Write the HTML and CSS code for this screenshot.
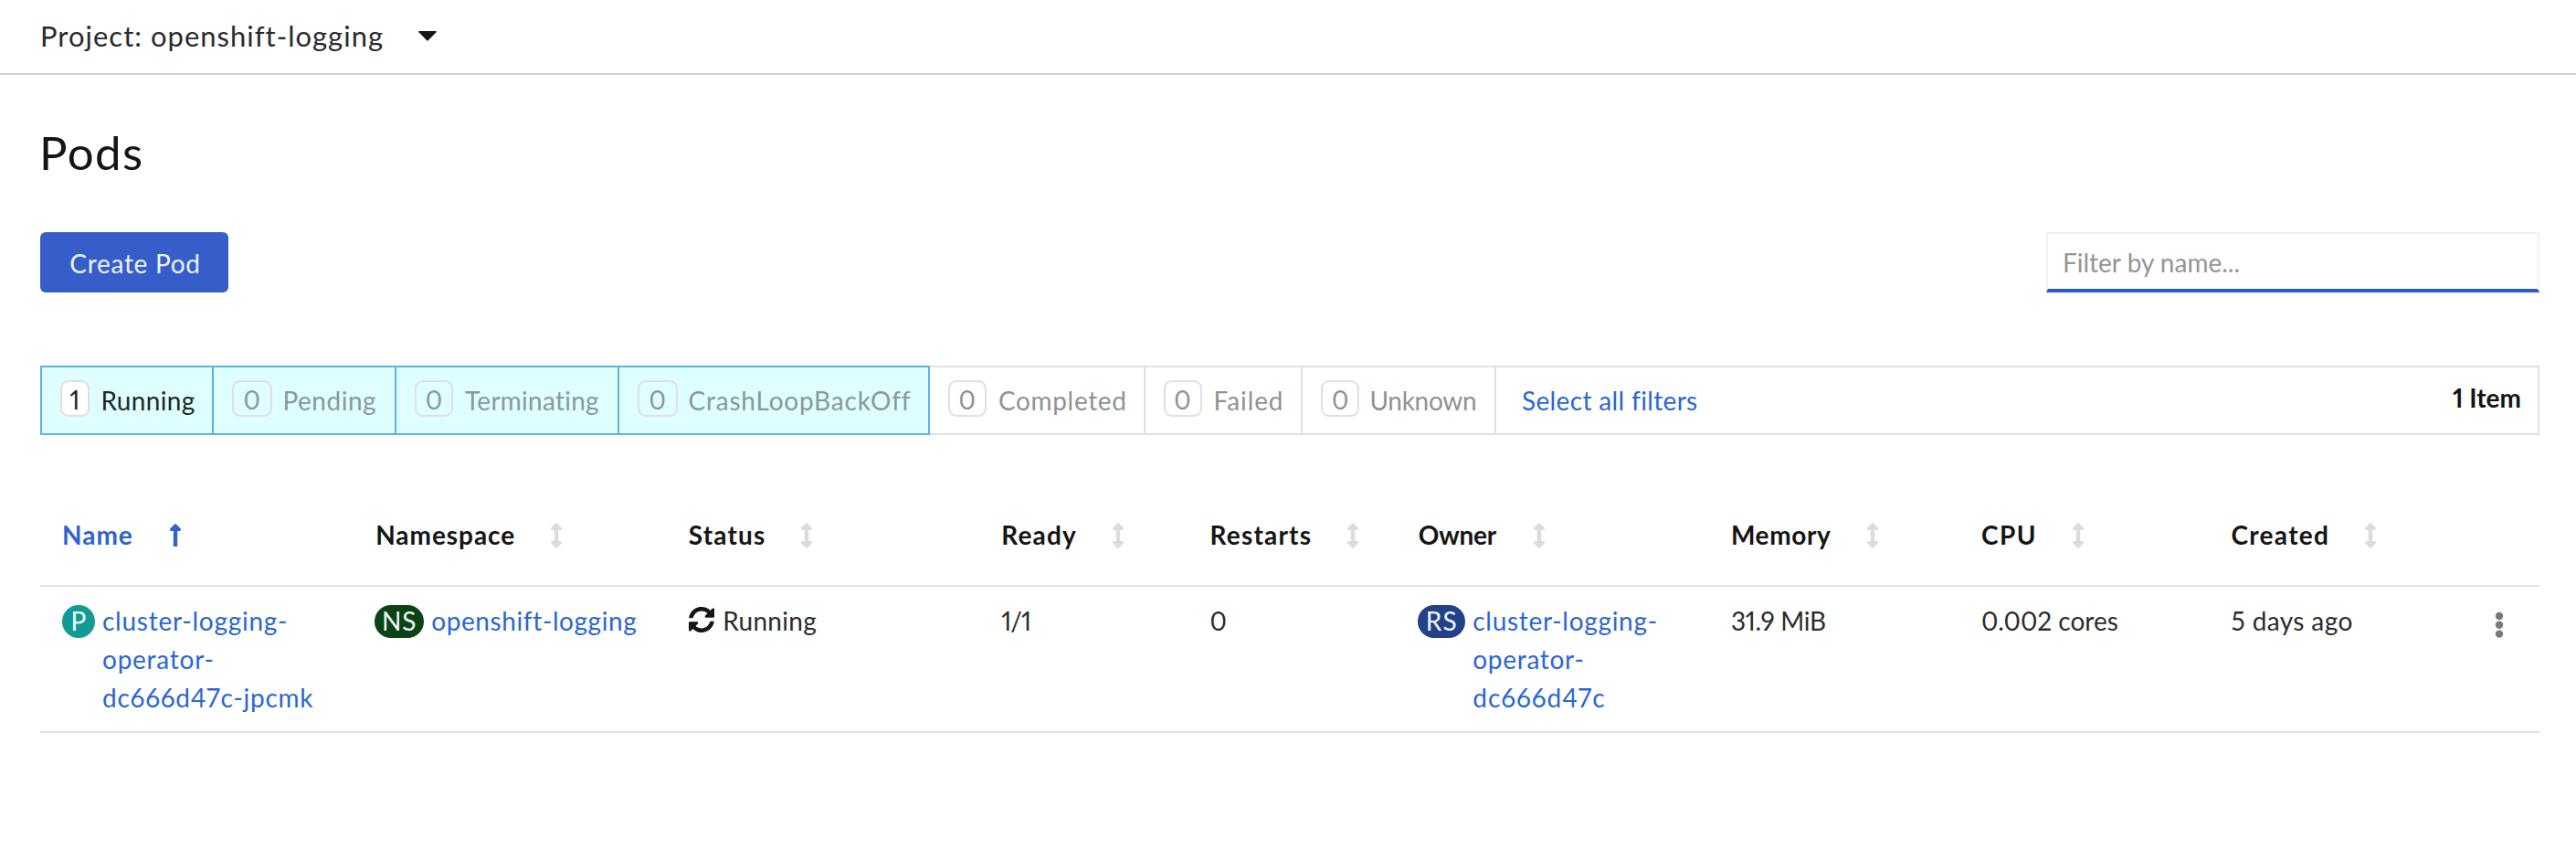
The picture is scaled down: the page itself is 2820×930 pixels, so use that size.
FILE: index.html
```html
<!DOCTYPE html>
<html lang="en">
<head>
<meta charset="utf-8">
<title>Pods</title>
<link rel="stylesheet" href="styles.css">
</head>
<body>
<svg class="defs" width="0" height="0" aria-hidden="true">
  <symbol id="sort" viewBox="0 0 12 28"><path d="M5.2.4Q6 -.3 6.800.4L11.600 5.200Q12.600 7.500 10.800 8H8.200V20H10.800Q12.600 20.500 11.600 22.800L6.800 27.600Q6 28.300 5.200 27.600L.4 22.800Q-.6 20.500 1.200 20H3.800V8H1.200Q-.6 7.500.4 5.200Z"/></symbol>
  <symbol id="sort-up" viewBox="0 0 12 28"><path d="M5.200 1.400Q6 .7 6.800 1.400L11.600 6.200Q12.600 8.500 10.800 9H8.200V25.200Q8.200 26 7.400 26H4.600Q3.800 26 3.800 25.200V9H1.200Q-.6 8.500.4 6.200Z"/></symbol>
</svg>
<header class="project-bar">
  <span class="project-name">Project: openshift-logging</span>
  <svg class="caret" width="20" height="11" viewBox="0 0 20 11"><path d="M.8 0h18.400q1 .3.3 1.300L11 10q-1 1-2 0L.5 1.300Q-.2.3.8 0z"/></svg>
</header>
<main class="page">
  <h1 class="title">Pods</h1>
  <div class="toolbar">
    <button class="create">Create Pod</button>
    <input class="search" type="text" placeholder="Filter by name...">
  </div>
  <div class="filters">
    <div class="filter on live running"><span class="count">1</span><span class="label">Running</span></div>
    <div class="filter on pending"><span class="count">0</span><span class="label">Pending</span></div>
    <div class="filter on terminating"><span class="count">0</span><span class="label">Terminating</span></div>
    <div class="filter on crash"><span class="count">0</span><span class="label">CrashLoopBackOff</span></div>
    <div class="filter completed"><span class="count">0</span><span class="label">Completed</span></div>
    <div class="filter failed"><span class="count">0</span><span class="label">Failed</span></div>
    <div class="filter unknown"><span class="count">0</span><span class="label">Unknown</span></div>
    <div class="summary"><a class="select-all">Select all filters</a><span class="items">1 Item</span></div>
  </div>
  <div class="table">
    <div class="row head">
      <div class="cell sorted">Name<svg class="sort"><use href="#sort-up"/></svg></div>
      <div class="cell h-namespace">Namespace<svg class="sort"><use href="#sort"/></svg></div>
      <div class="cell">Status<svg class="sort"><use href="#sort"/></svg></div>
      <div class="cell">Ready<svg class="sort"><use href="#sort"/></svg></div>
      <div class="cell">Restarts<svg class="sort"><use href="#sort"/></svg></div>
      <div class="cell h-owner">Owner<svg class="sort"><use href="#sort"/></svg></div>
      <div class="cell h-memory">Memory<svg class="sort"><use href="#sort"/></svg></div>
      <div class="cell h-cpu">CPU<svg class="sort"><use href="#sort"/></svg></div>
      <div class="cell h-created">Created<svg class="sort"><use href="#sort"/></svg></div>
      <div></div>
    </div>
    <div class="row body">
      <div class="cell"><span class="badge pod">P</span><a class="link pod-name">cluster-logging-<br>operator-<br>dc666d47c-jpcmk</a></div>
      <div class="cell"><span class="badge ns">NS</span><a class="link ns-name">openshift-logging</a></div>
      <div class="cell status"><svg class="sync" viewBox="8 8 496 496"><path d="M370.72 133.28C339.458 104.008 298.888 87.962 255.848 88c-77.458.068-144.328 53.178-162.791 126.850-1.344 5.363-6.122 9.150-11.651 9.150H24.103c-7.498 0-13.194-6.807-11.807-14.176C33.933 94.924 134.813 8 256 8c66.448 0 126.791 26.136 171.315 68.685L463.030 40.970C478.149 25.851 504 36.559 504 57.941V192c0 13.255-10.745 24-24 24H345.941c-21.382 0-32.090-25.851-16.971-40.971l41.750-41.749zM32 296h134.059c21.382 0 32.090 25.851 16.971 40.971l-41.750 41.750c31.262 29.273 71.835 45.319 114.876 45.280 77.418-.070 144.315-53.144 162.787-126.849 1.344-5.363 6.122-9.150 11.651-9.150h57.304c7.498 0 13.194 6.807 11.807 14.176C478.067 417.076 377.187 504 256 504c-66.448 0-126.791-26.136-171.315-68.685L48.970 471.030C33.851 486.149 8 475.441 8 454.059V320c0-13.255 10.745-24 24-24z"/></svg>Running</div>
      <div class="cell ready">1/1</div>
      <div class="cell restarts">0</div>
      <div class="cell"><span class="badge rs">RS</span><a class="link">cluster-logging-<br>operator-<br><span class="hash">dc666d47c</span></a></div>
      <div class="cell memory">31.9 MiB</div>
      <div class="cell cores">0.002 cores</div>
      <div class="cell age">5 days ago</div>
      <div class="cell kebab"><svg width="10" height="30" viewBox="0 0 10 30"><circle cx="5" cy="5" r="4.200"/><circle cx="5" cy="14.800" r="4.200"/><circle cx="5" cy="24.600" r="4.200"/></svg></div>
    </div>
  </div>
</main>
</body>
</html>
```

FILE: styles.css
```css
* { box-sizing: border-box; }
body {
  margin: 0;
  background: #fff;
  color: #151515;
  font: 28px/42px Lato, "Open Sans", sans-serif;
  font-variant-numeric: proportional-nums;
  font-variant-ligatures: none;
}
.defs { position: absolute; }

.project-bar {
  height: 82px;
  border-bottom: 2px solid #d2d2d2;
  padding: 0 44px 3px;
  display: flex;
  align-items: center;
  gap: 38px;
}
.project-name { font-size: 31px; letter-spacing: 1px; color: #2a2a2a; }
.caret { fill: #151515; margin-top: 1px; }

.page { padding: 53px 40px 0 44px; }
.title { font-size: 51px; line-height: 64px; font-weight: 400; letter-spacing: 1.4px; margin: 0 0 55px -1px; }

.toolbar { display: flex; justify-content: space-between; }
.create {
  width: 206px; height: 66px;
  border: 0; border-radius: 6px;
  background: #375ec8; color: #e9f3ff;
  padding: 1px 0 0 2px;
  font: inherit; letter-spacing: .7px;
}
.search {
  width: 540px; height: 66px;
  border: 2px solid #f0f0f0;
  border-bottom: 4px solid #2b5ac9;
  background: #fff;
  padding: 2px 15px 0 16px;
  font: inherit; color: #151515;
}
.search::placeholder { color: #949494; opacity: 1; }

.filters { margin-top: 80px; height: 76px; display: flex; }
.filter {
  border: solid #e0e0e0;
  border-width: 2px 0 2px 2px;
  padding: 14px 0 0 20px;
  display: flex;
  gap: 11.5px;
  color: #8f9294;
}
.filter.on { background: #dffeff; border-color: #5cb3e0; color: #8b9899; }
.filter.live { color: #1f2727; }
.label, .select-all { margin-top: 1px; }
.count {
  width: 42px; height: 40px;
  border: 2px solid #e0dfdf; border-radius: 9px;
  line-height: 38px; text-align: center;
}
.live .count { background: #fff; width: 32px; }
.running { width: 188px; letter-spacing: .35px; }
.filter.running { gap: 12.5px; }
.pending { width: 200px; letter-spacing: .5px; }
.pending .count, .crash .count { width: 44px; }
.terminating { width: 244px; letter-spacing: .25px; gap: 13px; }
.filter.crash { width: 342px; border-right-width: 2px; letter-spacing: .8px; }
.completed { width: 234px; border-left-width: 0; letter-spacing: .65px; gap: 13px; }
.failed { width: 172px; letter-spacing: .9px; gap: 12.5px; }
.unknown { width: 212px; letter-spacing: -.3px; }
.summary {
  flex: 1;
  border: 2px solid #e0e0e0;
  padding: 14px 18px 0 28px;
  display: flex;
  justify-content: space-between;
}
.select-all { color: #2b66d4; letter-spacing: .35px; }
.items { font-weight: 700; line-height: 38px; letter-spacing: 0; }

.table { margin-top: 88px; }
.row {
  display: grid;
  grid-template-columns: 343.2px 342.5px 342.5px 228.3px 228.3px 342.2px 274px 273.5px 274px 1fr;
  padding-left: 24px;
  border-bottom: 2px solid #e0e0e0;
}
.cell { display: flex; align-items: flex-start; white-space: nowrap; }
.head { height: 78px; font-weight: 700; letter-spacing: 1.2px; }
.sorted { color: #2f62d0; letter-spacing: 1px; }
.h-namespace { letter-spacing: .95px; }
.h-owner { letter-spacing: -.2px; }
.h-memory { letter-spacing: .6px; }
.h-cpu { letter-spacing: 1.5px; }
.h-created { letter-spacing: 1.3px; }
.sort { width: 12px; height: 28px; margin: 8px 0 0 38.5px; fill: #dcdcdc; }
.sorted .sort { fill: #2f62d0; margin-left: 40px; }
.h-owner .sort { margin-left: 41px; }
.h-memory .sort { margin-left: 40px; }

.body { padding-top: 16px; padding-bottom: 16px; color: #2c2c2c; }
.link { color: #2b66d4; letter-spacing: .7px; margin-left: 8px; }
.pod-name { letter-spacing: .75px; }
.ns-name { letter-spacing: .6px; }
.hash { letter-spacing: .95px; }
.badge {
  height: 36px; margin-top: 4px;
  border-radius: 18px;
  line-height: 35px; text-align: center;
  color: #f0fafa;
}
.pod { width: 36px; background: #129a96; }
.ns { width: 54px; background: #0b4216; letter-spacing: .8px; margin-left: -1px; }
.rs { width: 52px; background: #22418a; letter-spacing: 1.2px; margin-left: -.5px; }
.status { letter-spacing: .31px; }
.sync { width: 28px; height: 28px; margin: 6px 9px 0 .5px; fill: #151515; }
.ready { letter-spacing: -1px; }
.memory { letter-spacing: -.3px; }
.cores { letter-spacing: 0; }
.age { letter-spacing: .4px; }
.kebab { padding: 11px 0 0 15px; fill: #77797b; }
```
